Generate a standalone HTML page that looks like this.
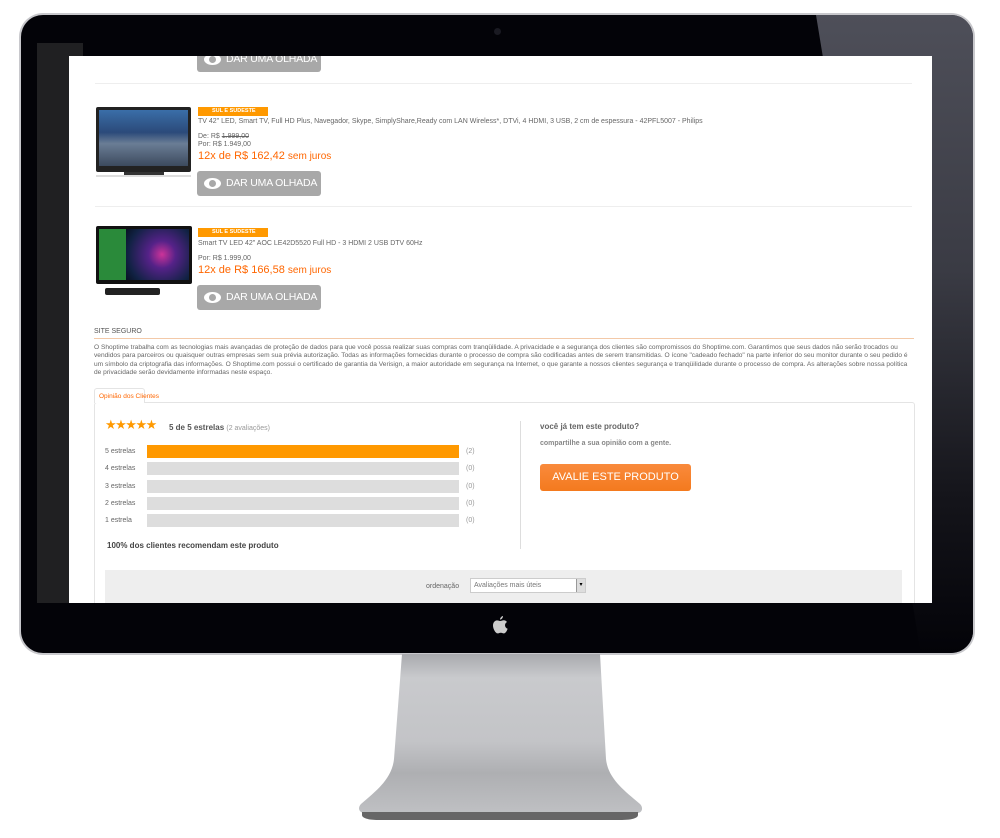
<!DOCTYPE html>
<html><head><meta charset="utf-8"><style>
*{margin:0;padding:0;box-sizing:border-box}
body{width:1000px;height:838px;background:#fff;position:relative;overflow:hidden;font-family:"Liberation Sans",sans-serif}
.abs{position:absolute}
#bezel{left:19px;top:13px;width:956px;height:642px;border-radius:24px;background:#c8c8cc;padding:2px}
#inner{width:100%;height:100%;border-radius:22px;background:#030308;position:relative;overflow:hidden}
#glare{position:absolute;left:0;top:0;width:100%;height:100%;background:linear-gradient(180deg,#4e4f59 0%,#3a3b44 40%,#15151b 75%,#030308 100%);clip-path:polygon(795px 0,954px 0,954px 640px,900px 640px)}
#strip{left:37px;top:43px;width:46px;height:560px;background:#202022}
#screen{left:69px;top:56px;width:863px;height:547px;background:#fff;overflow:hidden}
.btn{position:absolute;width:124px;height:25px;background:#a8a8a8;border-radius:3px;color:#fff;font-size:10.5px;line-height:25px;padding-left:29px;white-space:nowrap;letter-spacing:-.2px}
.btn:before{content:"";position:absolute;left:7px;top:7px;width:17px;height:11px;border-radius:50%;background:#fff}
.btn:after{content:"";position:absolute;left:12px;top:9px;width:7px;height:7px;border-radius:50%;background:#a8a8a8}
.hr{position:absolute;left:26px;width:817px;height:1px;background:#eee}
.tag{position:absolute;width:70px;height:9px;background:#f90;color:#fff;font-size:5.5px;font-weight:bold;line-height:9px;padding-left:14px;white-space:nowrap}
.t{position:absolute;font-size:7px;color:#666;white-space:nowrap}
.pr{position:absolute;font-size:11px;color:#f60;white-space:nowrap}
.bar{position:absolute;left:78px;width:312px;height:13px;background:#ddd}
.lbl{position:absolute;left:36px;font-size:7px;color:#666;white-space:nowrap}
.cnt{position:absolute;left:397px;font-size:7px;color:#999}
</style></head><body>
<div id="bezel" class="abs"><div id="inner"><div id="glare"></div>
<div class="abs" style="left:473px;top:13px;width:7px;height:7px;border-radius:50%;background:#1a1a22"></div>
<svg class="abs" style="left:469px;top:600px" width="20" height="24" viewBox="0 0 20 24"><path d="M13 1c0 2-1.5 3.5-3 3.6C10 2.8 11.5 1.2 13 1z" fill="#ccc"/><path d="M10 6c1.5 0 2.5-.8 3.6-.8 1.6 0 2.8.8 3.4 1.8-3 1.7-2.4 5.8.6 6.8-.6 2-2 4.6-3.6 4.6-1.2 0-1.700-.7-3.2-.7s-2 .7-3.2.7C5.6 18.4 3 14 3 10.5 3 7.5 5 5.4 7 5.4c1.3 0 2 .6 3 .6z" fill="#ccc"/></svg>
</div></div>
<div id="strip" class="abs"></div>
<div id="screen" class="abs">
<div class="btn" style="left:128px;top:-9px">DAR UMA OLHADA</div>
<div class="hr" style="top:27px"></div>
<div class="abs" style="left:27px;top:51px;width:95px;height:65px;background:#222;border-radius:2px"><div style="margin:3px;height:56px;background:linear-gradient(180deg,#3a6ea8,#2b4a7a 40%,#6a7d95 60%,#3c4a5e);"></div></div>
<div class="abs" style="left:55px;top:116px;width:40px;height:3px;background:#333"></div>
<div class="abs" style="left:27px;top:119px;width:95px;height:2px;background:#ddd"></div>
<div class="tag" style="left:129px;top:51px">SUL E SUDESTE</div>
<div class="t" style="left:129px;top:62px">TV 42" LED, Smart TV, Full HD Plus, Navegador, Skype, SimplyShare,Ready com LAN Wireless*, DTVi, 4 HDMI, 3 USB, 2 cm de espessura - 42PFL5007 - Philips</div>
<div class="t" style="left:129px;top:77px">De: R$ <s>1.999,00</s></div>
<div class="t" style="left:129px;top:85px">Por: R$ 1.949,00</div>
<div class="pr" style="left:129px;top:94px">12x de R$ 162,42 <span style="font-size:10px">sem juros</span></div>
<div class="btn" style="left:128px;top:115px">DAR UMA OLHADA</div>
<div class="hr" style="top:150px"></div>
<div class="abs" style="left:27px;top:170px;width:96px;height:58px;background:#111;border-radius:2px"><div style="margin:3px;height:51px;background:radial-gradient(circle at 70% 50%,#c39 0,#528 20%,#124 50%,#000 80%);"><div style="width:27px;height:51px;background:#2a8a3a"></div></div></div>
<div class="abs" style="left:36px;top:232px;width:55px;height:7px;background:#222;border-radius:2px"></div>
<div class="tag" style="left:129px;top:172px">SUL E SUDESTE</div>
<div class="t" style="left:129px;top:184px">Smart TV LED 42" AOC LE42D5520 Full HD - 3 HDMI 2 USB DTV 60Hz</div>
<div class="t" style="left:129px;top:199px">Por: R$ 1.999,00</div>
<div class="pr" style="left:129px;top:208px">12x de R$ 166,58 <span style="font-size:10px">sem juros</span></div>
<div class="btn" style="left:128px;top:229px">DAR UMA OLHADA</div>
<div class="t" style="left:25px;top:272px;color:#555;font-size:7px">SITE SEGURO</div>
<div class="abs" style="left:25px;top:282px;width:820px;height:1px;background:#f3c9a8"></div>
<div class="abs" style="left:25px;top:288px;width:815px;font-size:6.6px;line-height:8.3px;color:#666">O Shoptime trabalha com as tecnologias mais avançadas de proteção de dados para que você possa realizar suas compras com tranqüilidade. A privacidade e a segurança dos clientes são compromissos do Shoptime.com. Garantimos que seus dados não serão trocados ou vendidos para parceiros ou quaisquer outras empresas sem sua prévia autorização. Todas as informações fornecidas durante o processo de compra são codificadas antes de serem transmitidas. O ícone "cadeado fechado" na parte inferior do seu monitor durante o seu pedido é um símbolo da criptografia das informações. O Shoptime.com possui o certificado de garantia da Verisign, a maior autoridade em segurança na Internet, o que garante a nossos clientes segurança e tranqüilidade durante o processo de compra. As alterações sobre nossa política de privacidade serão devidamente informadas neste espaço.</div>
<div class="abs" style="left:25px;top:346px;width:821px;height:210px;border:1px solid #e4e4e4;border-radius:3px"></div>
<div class="abs" style="left:25px;top:332px;width:51px;height:15px;border:1px solid #e4e4e4;border-bottom:none;background:#fff;font-size:6.5px;color:#f60;padding:4px 0 0 4px;border-radius:3px 3px 0 0;white-space:nowrap">Opinião dos Clientes</div>
<div class="abs" style="left:36px;top:361px;color:#f90;font-size:13px;letter-spacing:-1.5px">★★★★★</div>
<div class="abs" style="left:100px;top:367px;font-size:8px;color:#555;font-weight:bold;white-space:nowrap">5 de 5 estrelas <span style="font-weight:normal;color:#999;font-size:7px">(2 avaliações)</span></div>
<div class="lbl" style="top:392px">5 estrelas</div><div class="bar" style="top:389px;background:#f90"></div><div class="cnt" style="top:392px">(2)</div>
<div class="lbl" style="top:409px">4 estrelas</div><div class="bar" style="top:406px"></div><div class="cnt" style="top:409px">(0)</div>
<div class="lbl" style="top:427px">3 estrelas</div><div class="bar" style="top:424px"></div><div class="cnt" style="top:427px">(0)</div>
<div class="lbl" style="top:444px">2 estrelas</div><div class="bar" style="top:441px"></div><div class="cnt" style="top:444px">(0)</div>
<div class="lbl" style="top:461px">1 estrela</div><div class="bar" style="top:458px"></div><div class="cnt" style="top:461px">(0)</div>
<div class="abs" style="left:38px;top:485px;font-size:8px;color:#444;font-weight:bold">100% dos clientes recomendam este produto</div>
<div class="abs" style="left:451px;top:365px;width:1px;height:128px;background:#ddd"></div>
<div class="abs" style="left:471px;top:366px;font-size:8px;color:#666;font-weight:bold">você já tem este produto?</div>
<div class="abs" style="left:471px;top:384px;font-size:7px;color:#888;font-weight:bold">compartilhe a sua opinião com a gente.</div>
<div class="abs" style="left:471px;top:408px;width:151px;height:27px;background:linear-gradient(#f98a3c,#f47a1e);border-radius:3px;color:#fff;font-size:11px;line-height:27px;text-align:center">AVALIE ESTE PRODUTO</div>
<div class="abs" style="left:36px;top:514px;width:797px;height:40px;background:#eee"></div>
<div class="abs" style="left:357px;top:527px;font-size:7px;color:#666">ordenação</div>
<div class="abs" style="left:401px;top:522px;width:116px;height:15px;background:#fff;border:1px solid #ccc;font-size:7px;color:#777;padding:3px 0 0 3px">Avaliações mais úteis<div style="position:absolute;right:0;top:0;width:9px;height:13px;background:#ddd;border-left:1px solid #999;font-size:6px;text-align:center;line-height:13px;color:#000">▾</div></div>
</div>
<svg class="abs" style="left:340px;top:654px" width="320" height="184" viewBox="0 0 320 184">
<defs><linearGradient id="g" x1="0" x2="0" y1="0" y2="1"><stop offset="0" stop-color="#a9aaae"/><stop offset=".15" stop-color="#c9cacd"/><stop offset=".55" stop-color="#c3c4c7"/><stop offset=".75" stop-color="#aeafb2"/><stop offset="1" stop-color="#bfc0c3"/></linearGradient></defs>
<path d="M62 0H260L266 105C268 125 285 137 300 150C303 153 303 158 298 159H24C18 158 18 153 21 150C36 137 52 125 54 105Z" fill="url(#g)"/>
<path d="M22 158H298V161C298 164 292 166 282 166H38C28 166 22 164 22 161Z" fill="#666"/>
</svg>
</body></html>
